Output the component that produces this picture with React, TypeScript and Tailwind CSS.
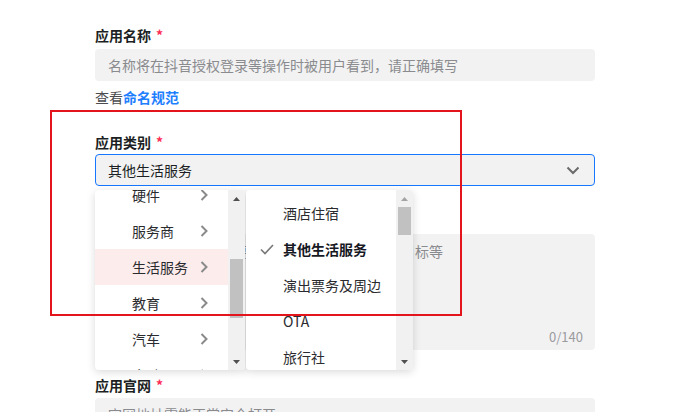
import React from "react";

function UpArrow({ color }: { color: string }) {
  return (
    <svg width="7" height="4" viewBox="0 0 7 4">
      <polygon points="0,4 3.5,0 7,4" fill={color} />
    </svg>
  );
}
function DownArrow({ color }: { color: string }) {
  return (
    <svg width="7" height="4" viewBox="0 0 7 4">
      <polygon points="0,0 7,0 3.5,4" fill={color} />
    </svg>
  );
}
function ChevronRight() {
  return (
    <svg width="8" height="12" viewBox="0 0 8 12">
      <polyline points="1.5,1 6.5,6 1.5,11" fill="none" stroke="#8a8a8a" strokeWidth="2" />
    </svg>
  );
}

const leftItems = ["硬件", "服务商", "生活服务", "教育", "汽车", "金融"];
const rightItems = ["酒店住宿", "其他生活服务", "演出票务及周边", "OTA", "旅行社"];

export default function App() {
  return (
    <div className="relative w-[684px] h-[412px] overflow-hidden bg-white text-[14px] font-['Noto_Sans_CJK_SC','Noto_Sans',sans-serif]">
      <div className="w-[595px] pl-[95px] pt-[24px]">
        {/* 应用名称 */}
        <div className="h-[22px] leading-[22px] font-bold text-[#1c1f23]">
          应用名称<span className="ml-[5px] text-[#fe2c55]">*</span>
        </div>
        <div className="mt-[3px] h-[32px] rounded-[4px] bg-[#f2f2f3] pl-[13px] leading-[32px] text-[#8a8b8e]">
          名称将在抖音授权登录等操作时被用户看到，请正确填写
        </div>
        <div className="mt-[5px] h-[22px] leading-[22px] text-[#4a4b4e]">
          查看<span className="font-bold text-[#1e80ff]">命名规范</span>
        </div>

        {/* 应用类别 */}
        <div className="mt-[23px] h-[22px] leading-[22px] font-bold text-[#1c1f23]">
          应用类别<span className="ml-[5px] text-[#fe2c55]">*</span>
        </div>
        <div className="mt-[1px] flex h-[32px] items-center justify-between rounded-[4px] border border-[#1677ff] bg-[#f2f2f3] pl-[12px] pr-[14px] text-[#1c1f23]">
          <span>其他生活服务</span>
          <svg width="14" height="9" viewBox="0 0 14 9">
            <polyline points="1.5,1.5 7,7 12.5,1.5" fill="none" stroke="#6b6b6b" strokeWidth="2" />
          </svg>
        </div>

        {/* 应用简介 */}
        <div className="mt-[25px] h-[22px] leading-[22px] font-bold text-[#1c1f23]">
          应用简介<span className="ml-[5px] text-[#fe2c55]">*</span>
        </div>
        <div className="relative mt-[1px] h-[116px] rounded-[4px] bg-[#f2f2f3] pl-[12px] pt-[6px] leading-[22px] text-[#8a8b8e] whitespace-nowrap overflow-hidden">
          请简要介绍应用的主要功能、服务内容、特色及目标等
          <span className="absolute right-[12px] bottom-[3px] text-[13px] leading-[20px] text-[#9a9b9e]">0/140</span>
        </div>

        {/* 应用官网 */}
        <div className="mt-[24px] h-[22px] leading-[22px] font-bold text-[#1c1f23]">
          应用官网<span className="ml-[5px] text-[#fe2c55]">*</span>
        </div>
        <div className="mt-[2px] h-[32px] rounded-[4px] bg-[#f2f2f3] pl-[13px] leading-[32px] text-[#8a8b8e]">
          官网地址需能正常安全打开
        </div>
      </div>

      {/* Cascader dropdown */}
      <div className="absolute left-[95px] top-[190px] flex">
        <div className="flex h-[180px] w-[150px] overflow-hidden rounded-[4px] bg-white shadow-[0_2px_8px_rgba(0,0,0,0.15)]">
          <div className="w-[133px] overflow-hidden">
            <div className="-mt-[13px]">
              {leftItems.map((t) => (
                <div
                  key={t}
                  className={`flex h-[36px] items-center justify-between pl-[37px] pr-[20px] text-[#2a2b2e] ${t === "生活服务" ? "bg-[#fcecec]" : ""}`}
                >
                  <span>{t}</span>
                  <ChevronRight />
                </div>
              ))}
            </div>
          </div>
          <div className="relative w-[17px] bg-[#f1f1f1]">
            <div className="flex h-[17px] items-center justify-center">
              <UpArrow color="#505050" />
            </div>
            <div className="absolute left-[2px] top-[69px] h-[59px] w-[13px] bg-[#c1c1c1]" />
            <div className="absolute bottom-0 left-0 flex h-[17px] w-[17px] items-center justify-center">
              <DownArrow color="#505050" />
            </div>
          </div>
        </div>
        <div className="ml-[1px] flex h-[180px] w-[167px] overflow-hidden rounded-[4px] bg-white shadow-[0_2px_8px_rgba(0,0,0,0.15)]">
          <div className="w-[150px] overflow-hidden">
            <div className="mt-[5px]">
              {rightItems.map((t) => (
                <div key={t} className="relative flex h-[36px] items-center pl-[37px] text-[#2a2b2e]">
                  {t === "其他生活服务" && (
                    <svg className="absolute left-[14px] top-[13px]" width="14" height="11" viewBox="0 0 14 11">
                      <polyline points="1,5.5 5,9.5 13,1" fill="none" stroke="#7a7a7a" strokeWidth="1.7" />
                    </svg>
                  )}
                  <span className={t === "其他生活服务" ? "font-bold text-[#161823]" : ""}>{t}</span>
                </div>
              ))}
            </div>
          </div>
          <div className="relative w-[17px] bg-[#f1f1f1]">
            <div className="flex h-[17px] items-center justify-center">
              <UpArrow color="#a3a3a3" />
            </div>
            <div className="absolute left-[2px] top-[17px] h-[28px] w-[13px] bg-[#c1c1c1]" />
            <div className="absolute bottom-0 left-0 flex h-[17px] w-[17px] items-center justify-center">
              <DownArrow color="#505050" />
            </div>
          </div>
        </div>
      </div>

      {/* Red annotation box */}
      <div className="pointer-events-none absolute left-[50px] top-[110px] h-[206px] w-[412px] border-2 border-[#e3141c]" />
    </div>
  );
}
